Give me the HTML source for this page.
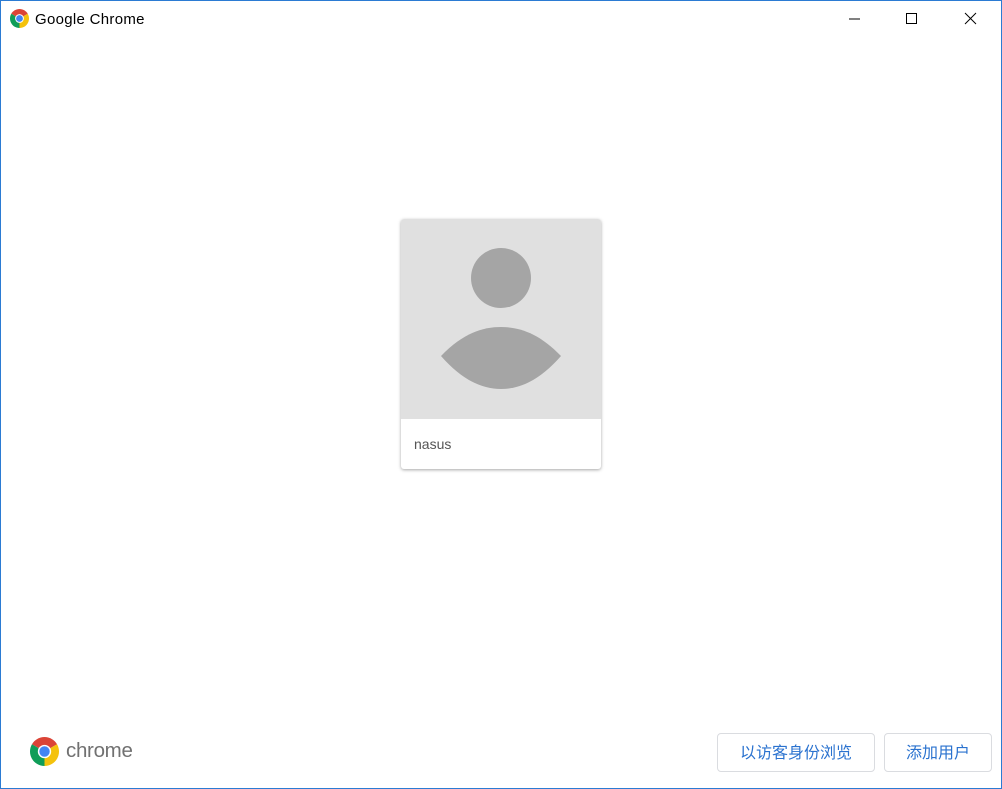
<!DOCTYPE html>
<html><head><meta charset="utf-8"><style>
html,body{margin:0;padding:0;width:1002px;height:789px;overflow:hidden;background:#fff;font-family:"Liberation Sans","Noto Sans CJK SC",sans-serif}
.win{position:absolute;left:0;top:0;width:1000px;height:787px;border:1px solid #2b7bd3;background:#fff}
.title{position:absolute;left:34px;top:10px;font-size:15px;color:#000;letter-spacing:0.3px}
.card{position:absolute;left:400px;top:218px;width:200px;height:250px;border-radius:3px;box-shadow:0 1px 3px rgba(0,0,0,.35);background:#fff;overflow:hidden}
.card .img{position:absolute;left:0;top:0;width:200px;height:200px;background:#e0e0e0}
.card .name{position:absolute;left:13px;top:217px;font-size:14px;color:#555}
.btn{position:absolute;top:732px;height:37px;border:1px solid #dadce0;border-radius:4px;color:#2a72cf;font-size:16px;line-height:39px;text-align:center;background:#fff}
.logo{position:absolute;left:65px;top:738px;font-size:20.5px;color:#717171;letter-spacing:-0.3px}
</style></head><body>
<div class="win">
<svg style="position:absolute;left:9px;top:8px" width="19" height="19" viewBox="-10 -10 20 20">
<path d="M0 0 L-8.66 -5 A10 10 0 0 1 8.66 -5Z" fill="#db4437"/>
<path d="M0 0 L8.66 -5 A10 10 0 0 1 0 10Z" fill="#f4c20d"/>
<path d="M0 0 L0 10 A10 10 0 0 1 -8.66 -5Z" fill="#0f9d58"/>
<circle r="4.6" fill="#fff"/><circle r="3.6" fill="#4285f4"/></svg>
<div class="title">Google Chrome</div>
<svg style="position:absolute;left:839px;top:7px" width="150" height="22">
<line x1="9" y1="11" x2="20" y2="11" stroke="#000" stroke-width="1"/>
<rect x="66.5" y="5.5" width="10" height="10" fill="none" stroke="#000"/>
<line x1="125" y1="5" x2="136" y2="16" stroke="#000"/><line x1="136" y1="5" x2="125" y2="16" stroke="#000"/>
</svg>
<div class="card"><div class="img">
<svg width="200" height="200"><circle cx="100" cy="59" r="30" fill="#a5a5a5"/>
<path d="M40,137 C62,114 82,108 100,108 C118,108 138,114 160,137 C140,160 120,170 100,170 C80,170 60,160 40,137Z" fill="#a5a5a5"/></svg>
</div><div class="name">nasus</div></div>
<svg style="position:absolute;left:29px;top:736px" width="29" height="29" viewBox="-10 -10 20 20">
<path d="M0 0 L-8.66 -5 A10 10 0 0 1 8.66 -5Z" fill="#db4437"/>
<path d="M0 0 L8.66 -5 A10 10 0 0 1 0 10Z" fill="#f4c20d"/>
<path d="M0 0 L0 10 A10 10 0 0 1 -8.66 -5Z" fill="#0f9d58"/>
<circle r="4.6" fill="#fff"/><circle r="3.6" fill="#4285f4"/></svg>
<div class="logo">chrome</div>
<div class="btn" style="left:716px;width:156px">以访客身份浏览</div>
<div class="btn" style="left:883px;width:106px">添加用户</div>
</div>
</body></html>
